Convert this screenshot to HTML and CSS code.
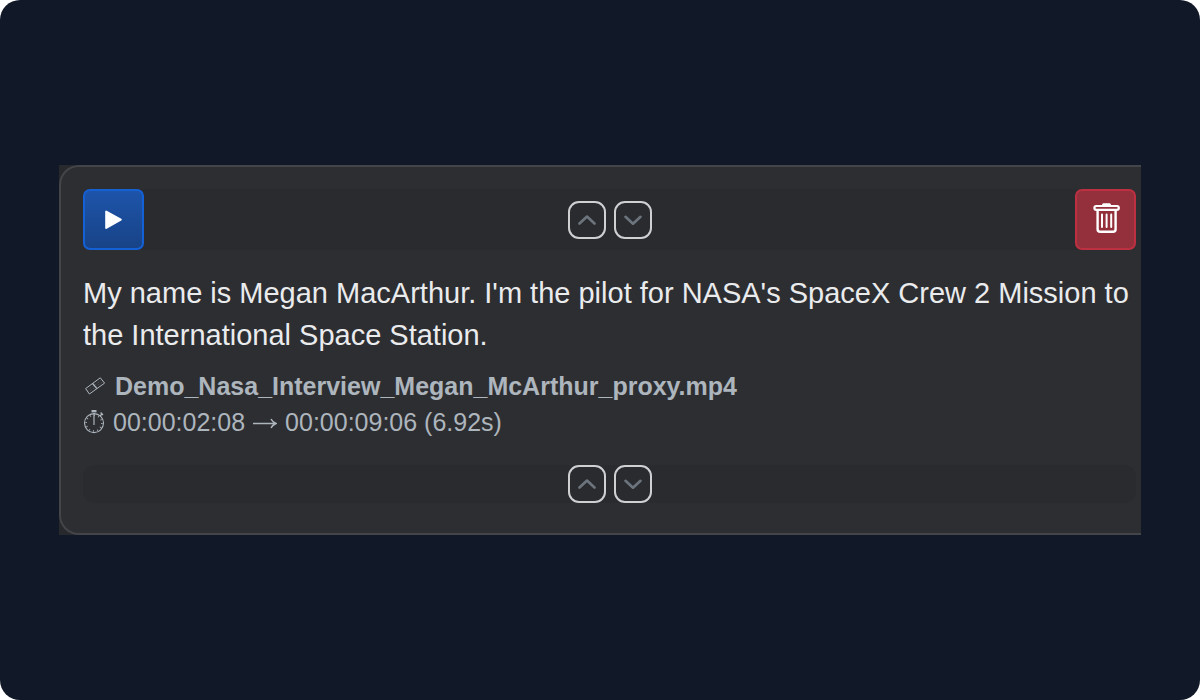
FILE: index.html
```html
<!DOCTYPE html>
<html lang="en">
<head>
<meta charset="utf-8">
<title>Interview clip</title>
<link rel="stylesheet" href="styles.css">
</head>
<body>
<main class="stage">
  <div class="frame">
    <article class="clip">
      <div class="bar">
        <button class="action play" type="button" aria-label="Play">
          <svg width="60" height="60" viewBox="0 0 60 60"><path d="M22.2 21.5v16.4L36.8 29.7z" fill="#fff" stroke="#fff" stroke-width="2" stroke-linejoin="round"/></svg>
        </button>
        <div class="movers">
          <button class="mover" type="button" aria-label="Move up"><svg width="18" height="10" viewBox="0 0 18 10"><path d="M1.5 8.5L9 1.5l7.5 7"/></svg></button>
          <button class="mover" type="button" aria-label="Move down"><svg width="18" height="10" viewBox="0 0 18 10"><path d="M1.5 1.8l7.5 7 7.5-7"/></svg></button>
        </div>
        <button class="action remove" type="button" aria-label="Delete">
          <svg width="60" height="60" viewBox="0 0 60 60" fill="none" stroke="#fff"><path d="M27.5 14.8h6" stroke-width="3" stroke-linecap="round"/><rect x="18.4" y="16" width="24.4" height="3.8" rx="1.9" stroke-width="2.2"/><path d="M21.6 20v19.2q0 2.6 2.6 2.6h12.8q2.6 0 2.6-2.6V20" stroke-width="2.4"/><path d="M26 24.5v12.5M30.6 24.5v12.5M35.2 24.5v12.5" stroke-width="2" stroke-linecap="round"/></svg>
        </button>
      </div>
      <p class="quote">My name is Megan MacArthur. I'm the pilot for NASA's SpaceX Crew 2 Mission to the International Space Station.</p>
      <div class="meta">
        <div class="row file">
          <svg class="strip" width="24" height="24" viewBox="0 0 24 24" fill="none" stroke="currentColor"><path d="M2.6 14.6L17.3 3.8l4.3 5.3L6.4 20z"/><path d="M4 16.7L18.8 5.8M5.2 18.3L20.3 7.4" stroke-dasharray="1 1" opacity=".3"/><path d="M9.6 9.5l4.3 5.2" stroke-width="1.3"/></svg>
          <strong>Demo_Nasa_Interview_Megan_McArthur_proxy.mp4</strong>
        </div>
        <div class="row time">
          <svg width="22" height="26" viewBox="0 0 22 26" fill="none" stroke="currentColor"><circle cx="11" cy="14.1" r="9.5" stroke-width="1.1"/><circle cx="11" cy="14.1" r="7.8" stroke-width="1.6" stroke-dasharray=".8 3.284"/><path d="M11 4v12" stroke-width="1.2"/><path d="M8.5 2.2h5" stroke-width="2.4"/><path d="M17 7l2-2M17.6 3.6l2.4 2.4" stroke-width="1.4"/></svg>
          <span>00:00:02:08</span>
          <svg width="24" height="14" viewBox="0 0 24 14" fill="none" stroke="currentColor" stroke-width="1.5"><path d="M0 8.5h23M18 4q1.5 3 5 4.5-3.5 1.5-5 4.5"/></svg>
          <span>00:00:09:06 (6.92s)</span>
        </div>
      </div>
      <div class="bar bottom">
        <div class="movers">
          <button class="mover" type="button" aria-label="Move up"><svg width="18" height="10" viewBox="0 0 18 10"><path d="M1.5 8.5L9 1.5l7.5 7"/></svg></button>
          <button class="mover" type="button" aria-label="Move down"><svg width="18" height="10" viewBox="0 0 18 10"><path d="M1.5 1.8l7.5 7 7.5-7"/></svg></button>
        </div>
      </div>
    </article>
  </div>
</main>
</body>
</html>
```
FILE: styles.css
```css
* { box-sizing: border-box; }
body { margin: 0; background: #fff; font-family: "Liberation Sans", Arial, sans-serif; }
.stage { min-height: 100vh; display: flex; align-items: center; padding: 0 59px; background: #111827; border-radius: 20px; }
.frame { flex: 1; min-width: 0; background: #28292c; }
.clip { padding: 22px 5px 30px 22px; background: #2d2e32; border: 2px solid #444548; border-right: 0; border-radius: 20px 0 0 20px; }
.bar { display: flex; align-items: center; justify-content: space-between; background: #2a2b2f; border-radius: 12px; }
.bottom { justify-content: center; }
button { display: flex; align-items: center; justify-content: center; padding: 0; cursor: pointer; }
.action { width: 61px; height: 61px; border-radius: 7px; }
.action svg { flex: none; }
.play { background: linear-gradient(#1d54aa, #184387); border: 2px solid #1460d5; }
.remove { background: #93303b; border: 2px solid #bd3042; }
.movers { display: flex; gap: 8px; }
.mover { width: 38px; height: 38px; background: transparent; border: 2px solid #cfd0d2; border-radius: 11px; }
.mover path { fill: none; stroke: #6c757d; stroke-width: 2.6; stroke-linecap: round; stroke-linejoin: round; }
.quote { margin: 22px 0 12px; color: #eaebed; font-size: 29px; line-height: 42px; }
.meta { margin-bottom: 25px; color: #adb5bd; font-size: 25px; line-height: 36px; }
.row { display: flex; align-items: center; gap: 8px; }
```
